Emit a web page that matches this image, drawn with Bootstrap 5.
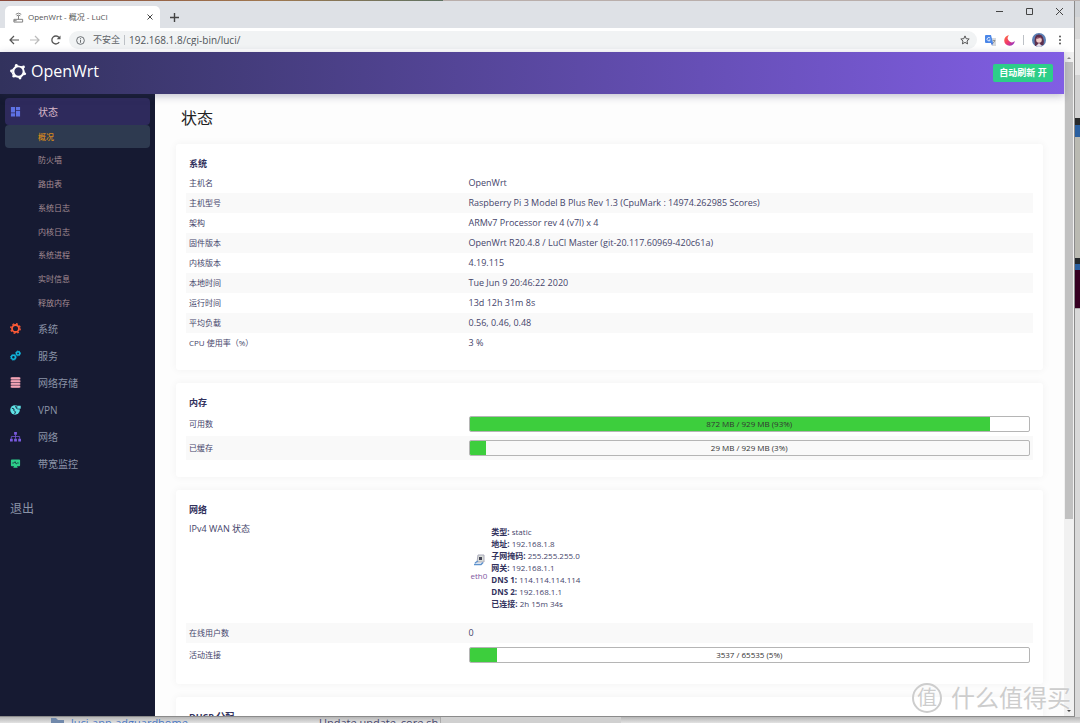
<!DOCTYPE html>
<html lang="zh-CN">
<head>
<meta charset="utf-8">
<meta name="viewport" content="width=device-width, initial-scale=1">
<title>OpenWrt - 概况 - LuCI</title>
<link href="https://cdn.jsdelivr.net/npm/bootstrap@5.3.0/dist/css/bootstrap.min.css" rel="stylesheet">
<style>
  body { font-family: "Open Sans", "Noto Sans CJK SC", sans-serif; font-size: 8px; line-height: 12px; color: #45456b; background: #e3e3e3; }
  a { text-decoration: none; }
  svg { display: block; flex: none; }
  button { background: none; border: 0; padding: 0; color: #444; }
  .wallpaper { height: 1px; background: linear-gradient(90deg, #8c4a3c, #a07850 25%, #5e7262 41%, #b9aeab 41%); }
  .browser { border-right: 1px solid #8b8b8b; border-bottom: 1px solid #8b8b8b; background: #fff; }
  .tabstrip { height: 27px; background: #dee1e6; padding: 5px 10px 0 5px; }
  .tab-item { width: 155px; border-radius: 5px 5px 0 0; background: #fff; padding: 0 7px 0 8px; color: #555; }
  .newtab { padding: 0 10px; }
  .controls { gap: 20px; height: 10px; }
  .toolbar { height: 24px; padding: 0 12px 0 9px; gap: 8px; }
  .history-nav { gap: 11px; }
  .omnibox { height: 18px; border-radius: 9px; background: #f1f3f4; padding: 0 7px; color: #5f6368; }
  .omnibox input { border: 0; background: none; outline: 0; font-size: 10px; color: #50555a; padding: 0; }
  .omnibox .insecure { font-size: 9px; }
  .omnibox .sep, .toolbar .sep { width: 1px; height: 10px; background: #bdc1c6; }
  .avatar { width: 14px; height: 14px; }
  .topbar { height: 42px; padding: 0 11px 0 10px; background: linear-gradient(90deg, #32325d, #815ee4); box-shadow: 0 2px 8px rgba(50,50,93,.3); z-index: 2; }
  .brand { color: #fff; font-size: 16px; line-height: 20px; gap: 4px; margin-bottom: 4px; }
  .refresh { background: #2dce89; color: #fff; font-weight: 700; font-size: 9px; line-height: 18px; border-radius: 2px; width: 60px; }
  .side { width: 155px; flex: none; background: #161a32; padding: 4px 5px; }
  .side a { display: flex; align-items: center; color: #8b93a7; font-size: 10px; height: 27px; padding: 0 5px; gap: 17px; border-radius: 4px; }
  .side .open { background: #2e2a5c; color: #d8b8c8; }
  .side .sub { height: 190px; }
  .side .sub li { flex: 1 1 0; }
  .side .sub a { height: 23px; font-size: 8px; padding-left: 33px; color: #a48d94; }
  .side .sub .active { background: #2e3a50; color: #d88a1c; font-weight: 500; }
  .side .logout { font-size: 12px; margin-top: 18px; }
  .side svg { width: 11px; height: 11px; }
  .content-area { padding: 0 21px; background: #fdfdfd; }
  .content-area h1 { font-size: 16px; line-height: 24px; margin: 12px 5px 14px; color: #222; font-weight: 400; }
  .panel { background: #fff; border-radius: 3px; box-shadow: 0 0 8px rgba(0,0,0,.05); padding: 11px 10px 17px; margin-bottom: 13px; }
  .panel h2 { font-size: 9px; line-height: 18px; margin: 0 3px; font-weight: 700; color: #32325d; }
  .panel table { width: 100%; table-layout: fixed; }
  .panel th { width: 33%; font-weight: 400; }
  .panel td, .panel .wan th { font-size: 9px; }
  .panel th, .panel td { padding: 4px 3px; height: 20px; vertical-align: middle; }
  .panel tr:nth-child(even) { background: #f9f9f9; }
  .meter { height: 16px; border: 1px solid #b5b5b5; border-radius: 2px; position: relative; overflow: hidden; font-size: 8px; }
  .meter .fill { height: 100%; background: #3dce3d; }
  .meter span { position: absolute; inset: 0; text-align: center; line-height: 13px; color: #333; }
  .panel .wan > * { height: 104px; vertical-align: top; }
  .wan b { color: #32325d; }
  .iface { gap: 4px; padding: 3px 0 0 2px; font-size: 8px; }
  .iface a { color: #8256a0; }
  .scroller { width: 10px; flex: none; background: #f1f1f1; padding: 10px 1px; }
  .thumb { height: 71%; background: #c1c1c1; }
  .scroller::before, .scroller::after { content: ""; position: absolute; left: 3px; border: 2px solid transparent; }
  .scroller::before { top: 3px; border-bottom-color: #888; }
  .scroller::after { bottom: 2px; border-top-color: #444; }
  .behind-right { width: 5px; flex: none; overflow: hidden; background: linear-gradient(#cfd2d6 0 16px, #d8d8d8 16px 38px, #e6e6e6 38px 74px, #d2d2d2 74px 117px, #292b2c 117px 124px, #2b60a0 124px 136px, #babab2 136px 257px, #25292c 257px 263px, #2b60a0 263px 269px, #360022 269px 307px, #aaa 307px 308px, #d9d9d9 308px); }
  .behind-bottom { height: 6px; overflow: hidden; padding-left: 39px; background: linear-gradient(#b5b5b5, #e2e2e2); font-size: 11px; line-height: 12px; }
  .behind-bottom a { color: #4a78c4; width: 248px; }
  .behind-bottom .edge { border-right: 1px solid #aaa; width: 122px; }
  .behind-bottom .gray { width: 180px; background: #d0d0d0; }
  .stamp { position: absolute; right: 9px; bottom: 10px; color: #cdcdcd; font-size: 24px; line-height: 30px; gap: 9px; text-shadow: 0 0 2px #fff; z-index: 5; }
  .stamp .seal { width: 30px; height: 30px; border: 2px solid #cdcdcd; border-radius: 50%; font-size: 20px; line-height: 26px; text-align: center; }
</style>
</head>
<body>
<div class="vh-100 d-flex flex-column overflow-hidden position-relative">
  <div class="wallpaper flex-shrink-0"></div>
  <div class="d-flex flex-fill" style="min-height:0">
    <div class="browser d-flex flex-column flex-fill">
      <div class="tabstrip d-flex flex-shrink-0">
        <div class="tab-item d-flex align-items-center">
          <svg width="11" height="11" viewBox="0 0 12 12" fill="none" stroke="#777"><path d="M1 8h9.500v3H1zM6 8V4M3 2.500q3-2.500 6 0M4 4.200q2-1.600 4 0M1 9.500h3"/></svg>
          <span class="ms-1 flex-fill">OpenWrt - 概况 - LuCI</span>
          <button aria-label="关闭标签页"><svg width="6" height="6" viewBox="0 0 6 6" stroke="currentColor"><path d="M.5.500l5 5M5.500.500l-5 5"/></svg></button>
        </div>
        <button class="newtab" aria-label="新标签页"><svg width="9" height="9" viewBox="0 0 9 9" stroke="currentColor" stroke-width="1.400"><path d="M4.500 0v9M0 4.500h9"/></svg></button>
        <div class="controls d-flex align-items-center ms-auto">
          <button aria-label="最小化"><svg width="10" height="10" viewBox="0 0 10 10" stroke="currentColor"><path d="M2 5.500h7"/></svg></button>
          <button aria-label="最大化"><svg width="10" height="10" viewBox="0 0 10 10" fill="none" stroke="currentColor"><path d="M2.500 2.500h6v6h-6z"/></svg></button>
          <button aria-label="关闭"><svg width="10" height="10" viewBox="0 0 10 10" stroke="currentColor"><path d="M2 2l7 7M9 2L2 9"/></svg></button>
        </div>
      </div>
      <div class="toolbar d-flex align-items-center flex-shrink-0">
        <div class="history-nav d-flex">
          <button aria-label="后退"><svg width="10" height="10" viewBox="0 0 10 10" fill="none" stroke="#555" stroke-width="1.200"><path d="M10 5H1M5 1L1 5l4 4"/></svg></button>
          <button aria-label="前进"><svg width="10" height="10" viewBox="0 0 10 10" fill="none" stroke="#bbb" stroke-width="1.200"><path d="M0 5h9M5 1l4 4-4 4"/></svg></button>
          <button aria-label="刷新"><svg width="10" height="10" viewBox="0 0 10 10" fill="none" stroke="#555" stroke-width="1.300"><path d="M8.200 7.200A4 4 0 1 1 8 2.500"/><path d="M9.500.500v3.800H5.700z" fill="#555" stroke="none"/></svg></button>
        </div>
        <div class="omnibox d-flex align-items-center flex-fill">
          <svg width="9" height="9" viewBox="0 0 10 10" fill="none" stroke="#5f6368"><circle cx="5" cy="5" r="4.300"/><path d="M5 4.300v3.200M5 2.400v1.100"/></svg>
          <span class="insecure ms-2 me-1">不安全</span><span class="sep me-1"></span>
          <input class="flex-fill" aria-label="地址" value="192.168.1.8/cgi-bin/luci/">
          <svg width="10" height="10" viewBox="0 0 10 10" fill="none" stroke="#555"><path d="M5 .9l1.200 2.800 3 .3-2.200 2 .6 2.900L5 7.400 2.400 8.900l.6-2.900-2.200-2 3-.3z"/></svg>
        </div>
        <svg width="11" height="11" viewBox="0 0 11 11"><path d="M5 3h6v8H7z" fill="#d5d8dc"/><path d="M1 0h5l2 8H1q-1 0-1-1V1q0-1 1-1z" fill="#4a86e8"/><path d="M6 8h2l-1 2.500z" fill="#3367d6"/><path d="M5.200 3.200A1.700 1.700 0 1 0 5.300 5H3.800" fill="none" stroke="#fff" stroke-width=".8"/><path d="M7.800 5.500h2.400M9.800 5.500q-.5 2-1.800 2.600" stroke="#777" fill="none" stroke-width=".7"/></svg>
        <svg width="11" height="11" viewBox="0 0 11 11"><defs><linearGradient id="moon" x2="1" y2="1"><stop stop-color="#ff7139"/><stop offset=".5" stop-color="#f0386b"/><stop offset="1" stop-color="#7a35e0"/></linearGradient></defs><path d="M5 .3A5.300 5.300 0 1 0 10.800 6 4 4 0 0 1 5 .3z" fill="url(#moon)"/></svg>
        <span class="sep"></span>
        <svg class="avatar" viewBox="0 0 14 14"><circle cx="7" cy="7" r="7" fill="#5b7fb5"/><path d="M3 13Q1 1 7 1.500T11.500 12z" fill="#5e2f4c"/><circle cx="7" cy="7" r="2.800" fill="#f1cbc8"/><path d="M4 6q3-4 6 0L8 5z" fill="#7c3b59"/><path d="M4 13l3-3 3 3q-3 2-6 0z" fill="#e3dce8"/></svg>
        <button class="ps-1" aria-label="菜单"><svg width="4" height="10" viewBox="0 0 4 10" fill="#555"><circle cx="2" cy="1.500" r="1"/><circle cx="2" cy="5" r="1"/><circle cx="2" cy="8.500" r="1"/></svg></button>
      </div>

      <div class="d-flex flex-fill" style="min-height:0">
        <div class="d-flex flex-column flex-fill" style="min-width:0">
          <header class="topbar d-flex align-items-center justify-content-between flex-shrink-0 position-relative">
            <a href="#" class="brand d-flex align-items-center">
              <svg width="17" height="17" viewBox="0 0 17 17" fill="none" stroke="#fff" stroke-width="1.700"><circle cx="8.500" cy="8.500" r="5"/><path d="M6 2.800l7 1.200 1.500 6.500-4.200 4.200-6.500-1.400-2.300-5.300z" stroke-width="1.200"/><g fill="#fff" stroke="none"><circle cx="6.300" cy="2.300" r="1.400"/><circle cx="13.500" cy="4" r="1.400"/><circle cx="14.700" cy="10.800" r="1.400"/><circle cx="10" cy="15" r="1.400"/><circle cx="3.800" cy="13.200" r="1.400"/><circle cx="1.500" cy="8" r="1.400"/></g></svg>
              OpenWrt
            </a>
            <button class="refresh">自动刷新 开</button>
          </header>
          <div class="d-flex flex-fill" style="min-height:0">
            <nav class="side">
              <a href="#" class="open"><svg viewBox="0 0 12 12" fill="#5e72e4"><path d="M1 1h4.500v6H1zM6.500 1H11v3.500H6.500zM1 8h4.500v3.500H1zM6.500 5.500H11v6H6.500z"/></svg>状态</a>
              <ul class="sub list-unstyled d-flex flex-column mb-0">
                <li><a href="#" class="active">概况</a></li>
                <li><a href="#">防火墙</a></li>
                <li><a href="#">路由表</a></li>
                <li><a href="#">系统日志</a></li>
                <li><a href="#">内核日志</a></li>
                <li><a href="#">系统进程</a></li>
                <li><a href="#">实时信息</a></li>
                <li><a href="#">释放内存</a></li>
              </ul>
              <a href="#"><svg viewBox="0 0 12 12" fill="none" stroke="#fb5a36"><circle cx="6" cy="6" r="3.800" stroke-width="2"/><circle cx="6" cy="6" r="5.200" stroke-width="1.400" stroke-dasharray="2 2.080"/></svg>系统</a>
              <a href="#"><svg viewBox="0 0 12 12" fill="none" stroke="#11b5dc" stroke-width="1.700"><circle cx="3.700" cy="8" r="2.200"/><circle cx="8.800" cy="3.700" r="1.800"/><circle cx="3.700" cy="8" r="3.200" stroke-width=".9" stroke-dasharray="1.200 1.300"/><circle cx="8.800" cy="3.700" r="2.700" stroke-width=".9" stroke-dasharray="1.200 1"/></svg>服务</a>
              <a href="#"><svg viewBox="0 0 12 12" fill="#f3a4b5" stroke="#161a32" stroke-width=".4"><rect x=".5" y="0" width="11" height="3.200" rx="1.500"/><rect x=".5" y="3" width="11" height="3.200" rx="1.500"/><rect x=".5" y="6" width="11" height="3.200" rx="1.500"/><rect x=".5" y="9" width="11" height="3" rx="1.500"/></svg>网络存储</a>
              <a href="#"><svg viewBox="0 0 12 12"><circle cx="5.500" cy="6.500" r="5.200" fill="#5fe3e6"/><path d="M2 4.500l2.500 1L4 7l2 1.500-1 2.500M6 2l1 2.500 2 .5" stroke="#161a32" fill="none"/><rect x="7.500" y="1.500" width="4.500" height="4" rx=".8" fill="#5fe3e6" stroke="#161a32" stroke-width=".6"/></svg>VPN</a>
              <a href="#"><svg viewBox="0 0 12 12" fill="#7a5ae0"><path d="M4.500 1h3v3h-3zM0 8.500h3v3H0zM4.500 8.500h3v3h-3zM9 8.500h3v3H9z"/><path d="M6 4v4.500M1.500 8.500V6h9v2.500" fill="none" stroke="#7a5ae0" stroke-width=".8"/></svg>网络</a>
              <a href="#"><svg viewBox="0 0 12 12"><path d="M2 1.500h8q1 0 1 1V8q0 1-1 1H7.500l1 1.500h-5L4.500 9H2Q1 9 1 8V2.500q0-1 1-1z" fill="#2dce89"/><path d="M2.500 5.500h1.700L5.500 4l1.300 2.500L8 5.500h1.500" fill="none" stroke="#161a32" stroke-width=".8"/></svg>带宽监控</a>
              <a href="#" class="logout">退出</a>
            </nav>
            <main class="content-area flex-fill overflow-hidden">
              <h1>状态</h1>
              <section class="panel">
                <h2>系统</h2>
                <table>
                  <tr><th>主机名</th><td>OpenWrt</td></tr>
                  <tr><th>主机型号</th><td>Raspberry Pi 3 Model B Plus Rev 1.3 (CpuMark : 14974.262985 Scores)</td></tr>
                  <tr><th>架构</th><td>ARMv7 Processor rev 4 (v7l) x 4</td></tr>
                  <tr><th>固件版本</th><td>OpenWrt R20.4.8 / LuCI Master (git-20.117.60969-420c61a)</td></tr>
                  <tr><th>内核版本</th><td>4.19.115</td></tr>
                  <tr><th>本地时间</th><td>Tue Jun 9 20:46:22 2020</td></tr>
                  <tr><th>运行时间</th><td>13d 12h 31m 8s</td></tr>
                  <tr><th>平均负载</th><td>0.56, 0.46, 0.48</td></tr>
                  <tr><th>CPU 使用率（%）</th><td>3 %</td></tr>
                </table>
              </section>
              <section class="panel">
                <h2>内存</h2>
                <table>
                  <tr><th>可用数</th><td><div class="meter"><div class="fill" style="width:93%"></div><span>872 MB / 929 MB (93%)</span></div></td></tr>
                  <tr><th>已缓存</th><td><div class="meter"><div class="fill" style="width:3%"></div><span>29 MB / 929 MB (3%)</span></div></td></tr>
                </table>
              </section>
              <section class="panel">
                <h2>网络</h2>
                <table>
                  <tr class="wan"><th>IPv4 WAN 状态</th><td>
                    <div class="iface d-flex align-items-center">
                      <a href="#" class="text-center"><svg class="mx-auto mb-1" width="12" height="12" viewBox="0 0 12 12"><path d="M5 1h6v7H4z" fill="#d9ddd8" stroke="#aab"/><path d="M6 3h3v3H6z" fill="#445"/><path d="M1 10.500h7l2-2M2 9l3-2" stroke="#5e92cc" stroke-width="1.500" fill="none"/></svg>eth0</a>
                      <div><b>类型:</b> static<br><b>地址:</b> 192.168.1.8<br><b>子网掩码:</b> 255.255.255.0<br><b>网关:</b> 192.168.1.1<br><b>DNS 1:</b> 114.114.114.114<br><b>DNS 2:</b> 192.168.1.1<br><b>已连接:</b> 2h 15m 34s</div>
                    </div></td></tr>
                  <tr><th>在线用户数</th><td>0</td></tr>
                  <tr><th>活动连接</th><td><div class="meter"><div class="fill" style="width:5%"></div><span>3537 / 65535 (5%)</span></div></td></tr>
                </table>
              </section>
              <section class="panel"><h2>DHCP 分配</h2></section>
            </main>
          </div>
        </div>
        <div class="scroller position-relative"><div class="thumb"></div></div>
      </div>
    </div>
    <div class="behind-right"></div>
  </div>
  <div class="behind-bottom d-flex flex-shrink-0">
    <svg class="ms-2 me-1 ps-1" width="20" height="12" viewBox="0 0 16 12"><path d="M0 1h5l2 2h6v9H0z" fill="#7189ab"/></svg>
    <a href="#">luci-app-adguardhome</a>
    <span class="edge">Update update_core.sh</span>
    <span class="gray"></span>
  </div>
  <div class="stamp d-flex align-items-center"><span class="seal">值</span><span>什么值得买</span></div>
</div>
<script src="https://cdn.jsdelivr.net/npm/bootstrap@5.3.0/dist/js/bootstrap.bundle.min.js"></script>
</body>
</html>
